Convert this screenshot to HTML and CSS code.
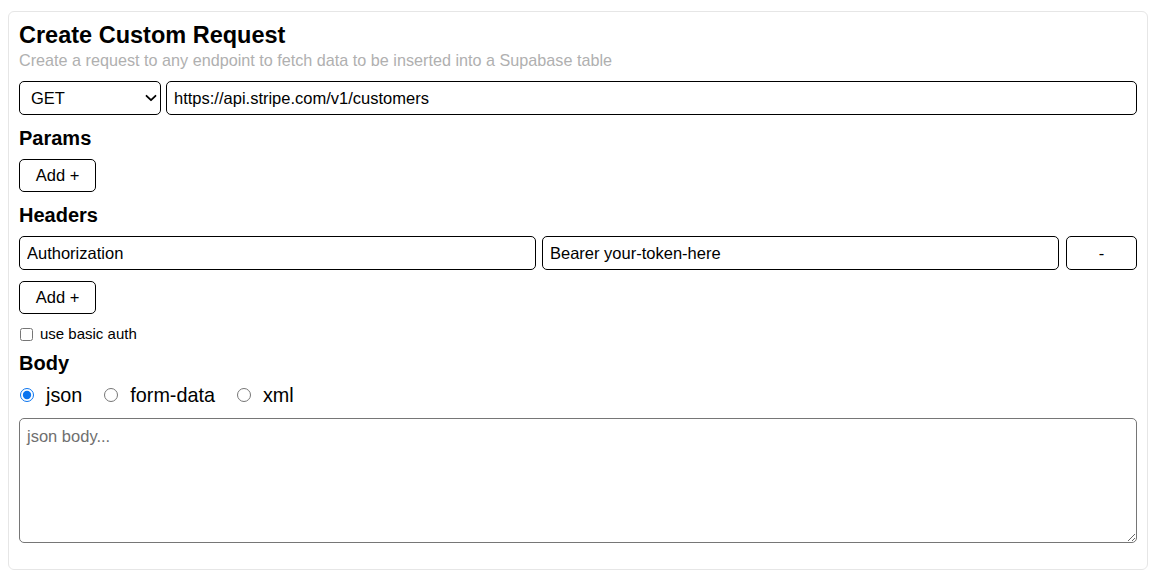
FILE: index.html
```html
<!DOCTYPE html>
<html>
<head>
<meta charset="utf-8">
<link rel="stylesheet" href="styles.css">
</head>
<body>
<div class="card">
  <h1 class="title">Create Custom Request</h1>
  <p class="subtitle">Create a request to any endpoint to fetch data to be inserted into a Supabase table</p>
  <div class="row url-row">
    <div class="select-wrap">
      <select class="method">
        <option>GET</option>
        <option>POST</option>
      </select>
      <svg class="chev" width="12" height="8" viewBox="0 0 12 8"><path d="M1.5 1.8 L6 6.2 L10.5 1.8" fill="none" stroke="#000" stroke-width="1.8" stroke-linecap="round" stroke-linejoin="round"/></svg>
    </div>
    <input class="field grow" type="text" value="https://api.stripe.com/v1/customers">
  </div>
  <h3 class="section">Params</h3>
  <div class="btn-row"><button class="btn add">Add +</button></div>
  <h3 class="section">Headers</h3>
  <div class="row header-row">
    <input class="field grow" type="text" value="Authorization">
    <input class="field grow" type="text" value="Bearer your-token-here">
    <button class="btn minus">-</button>
  </div>
  <div class="btn-row add2"><button class="btn add">Add +</button></div>
  <label class="check-row"><input type="checkbox" class="check"><span>use basic auth</span></label>
  <h3 class="section body-h">Body</h3>
  <div class="radio-row">
    <label class="radio"><input type="radio" name="b" checked><span>json</span></label>
    <label class="radio"><input type="radio" name="b"><span>form-data</span></label>
    <label class="radio"><input type="radio" name="b"><span>xml</span></label>
  </div>
  <textarea class="body-area" placeholder="json body..."></textarea>
</div>
</body>
</html>
```

FILE: styles.css
```css
html, body {
  margin: 0;
  padding: 0;
  background: #ffffff;
}
body {
  padding: 11px 11px 0 8px;
  font-family: "Liberation Sans", Arial, sans-serif;
  color: #000;
}
.card {
  border: 1px solid #e6e6e6;
  border-radius: 6px;
  padding: 9px 10px 26px 10px;
  display: flex;
  flex-direction: column;
}
.title {
  margin: 0;
  font-size: 23.5px;
  line-height: 28px;
  font-weight: bold;
}
.subtitle {
  margin: 2px 0 0 0;
  font-size: 16.2px;
  line-height: 18px;
  color: #b0b0b0;
}
.row {
  display: flex;
  gap: 6px;
  align-items: stretch;
}
.url-row {
  margin-top: 12px;
  gap: 5px;
}
.select-wrap {
  position: relative;
  width: 142px;
  height: 34px;
  flex: none;
}
.method {
  appearance: none;
  -webkit-appearance: none;
  width: 100%;
  height: 100%;
  box-sizing: border-box;
  border: 1px solid #000;
  border-radius: 5px;
  background: #fff;
  font-family: "Liberation Sans", Arial, sans-serif;
  font-size: 16.5px;
  color: #000;
  padding: 0 0 0 11px;
  margin: 0;
}
.chev {
  position: absolute;
  right: 4px;
  top: 13px;
  pointer-events: none;
}
.field {
  height: 34px;
  box-sizing: border-box;
  border: 1px solid #000;
  border-radius: 5px;
  padding: 0 7px;
  margin: 0;
  font-family: "Liberation Sans", Arial, sans-serif;
  font-size: 16.5px;
  color: #000;
  background: #fff;
  min-width: 0;
}
.grow {
  flex: 1 1 0;
}
.section {
  margin: 11px 0 0 0;
  font-size: 20px;
  line-height: 24px;
  font-weight: bold;
}
.btn-row {
  display: flex;
  margin-top: 9px;
}
.btn {
  height: 33px;
  box-sizing: border-box;
  border: 1px solid #000;
  border-radius: 5px;
  background: #fff;
  font-family: "Liberation Sans", Arial, sans-serif;
  font-size: 16.5px;
  color: #000;
  margin: 0;
  padding: 0;
}
.add {
  width: 77px;
}
.header-row {
  margin-top: 9px;
}
.minus {
  width: 71px;
  height: 34px;
  flex: none;
  margin-left: 1px;
}
.add2 {
  margin-top: 11px;
}
.check-row {
  display: flex;
  align-items: center;
  margin-top: 12px;
  font-size: 15px;
  line-height: 16px;
}
.check {
  width: 13px;
  height: 13px;
  margin: 0 7px 0 1px;
}
.body-h {
  margin-top: 9px;
}
.radio-row {
  display: flex;
  align-items: center;
  gap: 21px;
  margin-top: 8px;
  font-size: 19.8px;
  line-height: 24px;
}
.radio {
  display: flex;
  align-items: center;
}
.radio input {
  width: 14px;
  height: 14px;
  margin: 0 12px 0 1px;
  accent-color: #0a74ef;
}
.body-area {
  margin-top: 11px;
  height: 125px;
  box-sizing: border-box;
  border: 1px solid #767676;
  border-radius: 5px;
  padding: 8px 7px;
  font-family: "Liberation Sans", Arial, sans-serif;
  font-size: 16.5px;
  resize: vertical;
}
.body-area::placeholder {
  color: #6f6f6f;
}
```
